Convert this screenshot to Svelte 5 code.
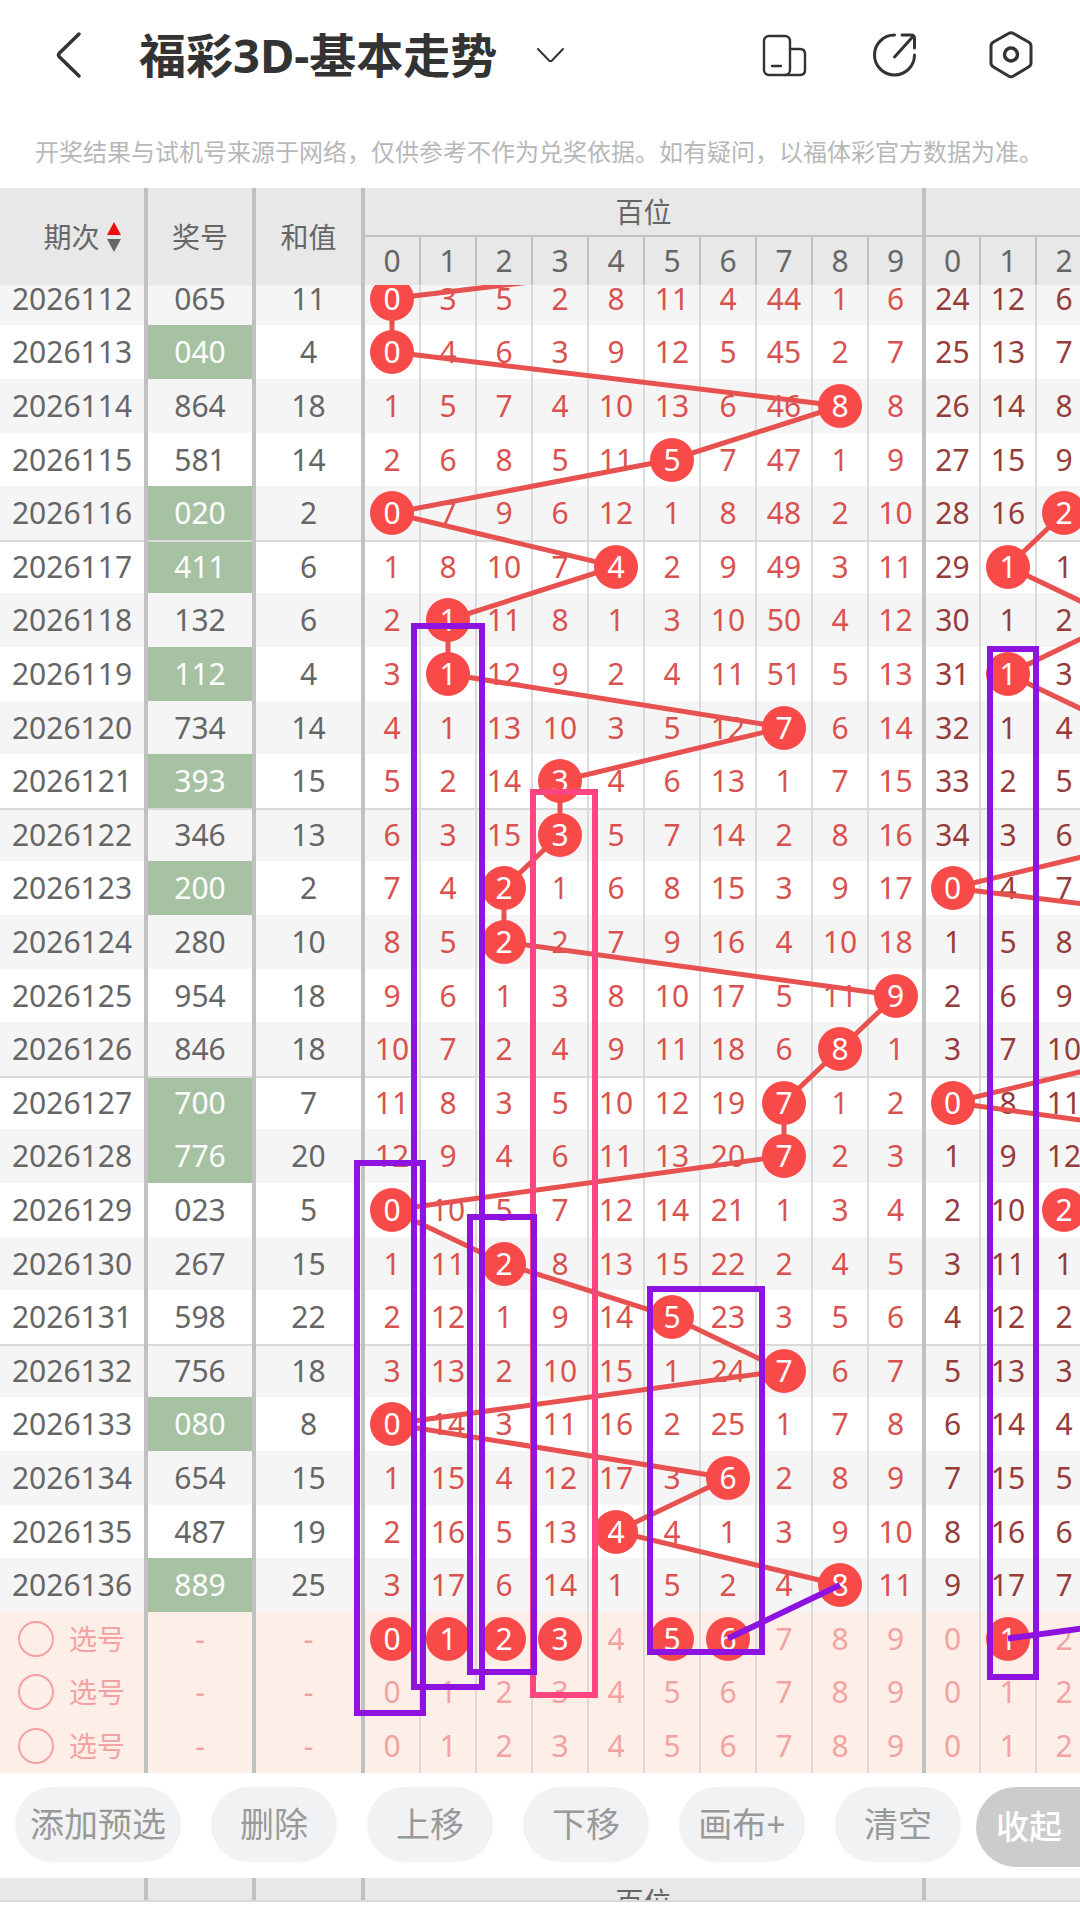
<script lang="ts">
    type Group = { name: string, digit: number, x: number, start: number[], columns: number[] };
    type Box = { x: number, y: number, w: number, h: number, color: string };

    const FIRST_ISSUE = 2026112;
    const CELL = 56;
    const PURPLE = '#8e13e0';
    const PINK = '#fd467f';

    const prizes = [
        '065', '040', '864', '581', '020', '411', '132', '112', '734', '393', '346', '200', '280',
        '954', '846', '700', '776', '023', '267', '598', '756', '080', '654', '487', '889'
    ];

    // x is the centre of the group's first column, start holds the counts of the first row
    const groups: Group[] = [
        { name: '百位', digit: 0, x: 392, start: [0, 3, 5, 2, 8, 11, 4, 44, 1, 6], columns: [0, 1, 2, 3, 4, 5, 6, 7, 8, 9] },
        { name: '', digit: 1, x: 952, start: [24, 12, 6], columns: [0, 1, 2] }
    ];

    // 53/54 row rhythm, 268px for every five rows
    const rhythm = [53, 54, 54, 53, 54];
    const rowTops = [0];
    for (let i = 0; i < prizes.length + 3; i++) rowTops.push(rowTops[i] + rhythm[i % 5]);
    const centerY = (row: number) => (rowTops[row] + rowTops[row + 1]) / 2;

    function missingCounts(group: Group) {
        const rows: number[][] = [];
        prizes.forEach((prize, i) => {
            const hit = Number(prize[group.digit]);
            rows.push(group.columns.map((c) => {
                if (c === hit) return 0;
                return i === 0 ? group.start[c] : rows[i - 1][c] + 1;
            }));
        });
        return rows;
    }

    const counts = groups.map(missingCounts);

    const rows = prizes.map((prize, i) => ({
        issue: FIRST_ISSUE + i,
        prize,
        sum: [...prize].reduce((total, d) => total + Number(d), 0),
        repeated: new Set(prize).size < 3
    }));

    function linePoints(group: Group, before: string) {
        const points = prizes.map((prize, i) => `${group.x + Number(prize[group.digit]) * CELL},${centerY(i)}`);
        return [before, ...points].filter(Boolean).join(' ');
    }

    const lines = [linePoints(groups[0], '840,-27'), linePoints(groups[1], '')];

    const boxes: Box[] = [
        { x: 533, y: 520, w: 62, h: 903, color: PINK },
        { x: 414, y: 354, w: 68, h: 1061, color: PURPLE },
        { x: 357, y: 891, w: 66, h: 550, color: PURPLE },
        { x: 470, y: 945, w: 64, h: 455, color: PURPLE },
        { x: 650, y: 1017, w: 112, h: 363, color: PURPLE },
        { x: 990, y: 377, w: 46, h: 1028, color: PURPLE }
    ];

    const lastRow = prizes.length - 1;
    const guides = [
        { x1: 840, x2: 728 },
        { x1: 1400, x2: 1008 }
    ];

    let picks: number[][][] = $state([
        [[0, 1, 2, 3, 5, 6], [1]],
        [[], []],
        [[], []]
    ]);
    let activePick = $state(-1);

    const tools = ['添加预选', '删除', '上移', '下移', '画布+', '清空'];

    function toggle(row: number, group: number, digit: number) {
        const list = picks[row][group];
        picks[row][group] = list.includes(digit) ? list.filter((d) => d !== digit) : [...list, digit];
    }
</script>

{#snippet columnWidths()}
    <colgroup>
        <col class="w-issue" />
        <col class="w-prize" />
        <col class="w-sum" />
        {#each { length: 9 } as _}<col class="w-digit" />{/each}
        <col class="w-last" />
        <col class="w-first" />
        <col class="w-digit" />
        <col class="w-digit" />
    </colgroup>
{/snippet}

<div class="page">
    <header class="top-bar">
        <button class="icon-btn" aria-label="返回">
            <svg width="48" height="48" viewBox="0 0 48 48">
                <path d="M34 3 L14.500 22 Q12.500 24 14.500 26 L34 45" stroke-width="3.500" />
            </svg>
        </button>
        <h1>福彩3D-基本走势</h1>
        <button class="icon-btn" aria-label="切换走势">
            <svg width="48" height="48" viewBox="0 0 48 48">
                <path d="M11 18 L22 29.500 Q23.500 31 25 29.500 L36 18" stroke-width="2" />
            </svg>
        </button>
        <div class="actions">
            <button class="icon-btn" aria-label="横竖屏">
                <svg width="48" height="48" viewBox="0 0 48 48">
                    <rect x="4" y="5" width="26" height="39" rx="5" stroke-width="2.400" />
                    <path d="M30 18 H40 Q45 18 45 23 V39 Q45 44 40 44 H25" stroke-width="2.400" />
                    <path d="M12 35 H21" stroke-width="2.400" />
                </svg>
            </button>
            <button class="icon-btn" aria-label="分享">
                <svg width="48" height="48" viewBox="0 0 48 48">
                    <path d="M24.500 4 A20 20 0 1 0 44.500 24" stroke-width="3" />
                    <path d="M32 4 H41 Q44.500 4 44.500 7.500 V17" stroke-width="3" />
                    <path d="M24.500 26 L43 5.500" stroke-width="3" />
                </svg>
            </button>
            <button class="icon-btn wide" aria-label="设置">
                <svg width="48" height="48" viewBox="0 0 48 48">
                    <path d="M21.500 2.500 Q24 1 26.500 2.500 L41.500 11 Q44 12.500 44 15 V32 Q44 34.500 41.500 36 L26.500 45 Q24 46.500 21.500 45 L6.500 36 Q4 34.500 4 32 V15 Q4 12.500 6.500 11 Z" stroke-width="3" />
                    <circle cx="24" cy="23.500" r="6.500" stroke-width="3.500" />
                </svg>
            </button>
        </div>
    </header>

    <p class="notice">开奖结果与试机号来源于网络，仅供参考不作为兑奖依据。如有疑问，以福体彩官方数据为准。</p>

    <div class="clip">
        <table class="head">
            {@render columnWidths()}
            <thead>
                <tr>
                    <th rowspan="2" class="thick">
                        <button class="sort">
                            期次
                            <svg width="14" height="30" viewBox="0 0 14 30" aria-hidden="true">
                                <path d="M7 0 L14 13 H0 Z" fill="#f20d0d" />
                                <path d="M7 30 L14 17 H0 Z" fill="#666" />
                            </svg>
                        </button>
                    </th>
                    <th rowspan="2" class="thick">奖号</th>
                    <th rowspan="2" class="thick">和值</th>
                    <th colspan="10" class="thick group">百位</th>
                    <th colspan="3" class="group"></th>
                </tr>
                <tr>
                    {#each groups as group}
                        {#each group.columns as c}
                            <th class="digit" class:thick={c === 9}>{c}</th>
                        {/each}
                    {/each}
                </tr>
            </thead>
        </table>
    </div>

    <div class="clip">
        <div class="chart">
            <table class="body">
                {@render columnWidths()}
                <tbody>
                    {#each rows as row, i}
                        <tr class:ruled={i > 0 && i % 5 === 0}>
                            <td class="thick">{row.issue}</td>
                            <td class="thick" class:repeated={row.repeated}>{row.prize}</td>
                            <td class="thick">{row.sum}</td>
                            {#each groups as group, g}
                                {#each group.columns as c}
                                    <td class={g === 0 ? 'hundreds' : 'tens'} class:thick={c === 9}>
                                        {#if Number(row.prize[group.digit]) === c}
                                            <span class="ball">{c}</span>
                                        {:else}
                                            {counts[g][i][c]}
                                        {/if}
                                    </td>
                                {/each}
                            {/each}
                        </tr>
                    {/each}
                    {#each picks as pick, p}
                        <tr class="pick-row">
                            <td class="thick">
                                <label>
                                    <input type="radio" name="pick" value={p} bind:group={activePick} />
                                    选号
                                </label>
                            </td>
                            <td class="thick">-</td>
                            <td class="thick">-</td>
                            {#each groups as group, g}
                                {#each group.columns as c}
                                    <td class:thick={c === 9}>
                                        <button class="pick" class:ball={pick[g].includes(c)} onclick={() => toggle(p, g, c)}>{c}</button>
                                    </td>
                                {/each}
                            {/each}
                        </tr>
                    {/each}
                </tbody>
            </table>

            <svg class="lines" aria-hidden="true">
                {#each lines as points}
                    <polyline {points} />
                {/each}
            </svg>

            <svg class="marks" aria-hidden="true">
                {#each boxes as box}
                    <rect x={box.x} y={box.y} width={box.w} height={box.h} stroke={box.color} />
                {/each}
                {#each guides as guide}
                    <line x1={guide.x1} y1={centerY(lastRow)} x2={guide.x2} y2={centerY(lastRow + 1)} stroke={PURPLE} />
                {/each}
            </svg>
        </div>
    </div>

    <div class="tool-bar">
        <div class="tools">
            {#each tools as tool}
                <button class="tool">{tool}</button>
            {/each}
        </div>
        <button class="collapse">收起</button>
    </div>

    <div class="clip next">
        <table class="head">
            {@render columnWidths()}
            <tbody>
                <tr>
                    <td class="thick"></td>
                    <td class="thick"></td>
                    <td class="thick"></td>
                    <td colspan="10" class="thick group">百位</td>
                    <td colspan="3" class="group"></td>
                </tr>
            </tbody>
        </table>
    </div>
</div>

<style>
    :global(body) { margin: 0; background: #fff; }

    .page {
        min-height: 100vh;
        overflow: hidden;
        background: #fff;
        color: #666;
        font-family: "Noto Sans", "Noto Sans CJK SC", sans-serif;
    }

    button {
        margin: 0;
        padding: 0;
        border: 0;
        background: none;
        color: inherit;
        font: inherit;
        cursor: pointer;
    }

    .top-bar {
        display: flex;
        align-items: center;
        height: 110px;
        padding: 0 38px 0 45px;
    }

    h1 {
        margin: 0 30px 0 46px;
        color: #333;
        font-size: 47px;
        font-weight: 700;
        line-height: 60px;
        white-space: nowrap;
    }

    .icon-btn { display: flex; justify-content: center; width: 48px; }
    .icon-btn.wide { width: 62px; }
    .icon-btn svg { fill: none; stroke: #333; stroke-linecap: round; stroke-linejoin: round; }

    .actions { display: flex; gap: 62px; margin-left: auto; }

    .notice {
        margin: 0;
        padding: 24px 0 18px 35px;
        color: #b8b8b8;
        font-size: 24px;
        line-height: 36px;
        white-space: nowrap;
    }

    .clip { overflow: hidden; }

    /* the columns alone decide how wide the tables are */
    table { width: 0; table-layout: fixed; border-collapse: separate; border-spacing: 0; }
    .w-issue { width: 148px; }
    .w-prize { width: 108px; }
    .w-sum { width: 109px; }
    .w-first { width: 55px; }
    .w-digit { width: 56px; }
    .w-last { width: 57px; }

    th, td {
        box-sizing: border-box;
        padding: 0;
        border-right: 2px solid #dadada;
        font-weight: 400;
        text-align: center;
        white-space: nowrap;
    }
    .thick { border-right: 4px solid #c1c1c1; }

    .head { background: #e8e8e8; font-size: 28px; line-height: 40px; }
    .head .group { height: 49px; border-bottom: 2px solid #c1c1c1; }
    .head .digit { height: 48px; font-size: 30px; border-right-color: #c1c1c1; }
    .head .digit.thick { border-right-color: #c1c1c1; }

    .sort { display: inline-flex; align-items: center; gap: 7px; padding-left: 20px; }

    .chart { position: relative; margin-top: -13px; }
    .body { font-size: 30px; line-height: 40px; }
    .body tr { height: 54px; background: #fff; }
    .body tr:nth-child(5n + 1), .body tr:nth-child(5n + 4) { height: 53px; }
    .body tr:nth-child(odd) { background: #f5f5f5; }
    .body tr.ruled td { box-shadow: inset 0 2px #dadada; }
    .body tr.pick-row { background: #feeee8; color: #f2a3a1; }

    .repeated { background: #a7c1a3; color: #fff; }
    .hundreds { color: #d9524f; }
    .tens { color: #963c3a; }

    .ball, .pick { display: block; width: 44px; height: 44px; margin: 0 auto; line-height: 44px; }
    .ball {
        position: relative;
        z-index: 2;
        border-radius: 50%;
        background: #f94a4a;
        color: #fff;
    }

    label { display: flex; align-items: center; gap: 15px; padding-left: 18px; font-size: 28px; }
    input {
        appearance: none;
        box-sizing: border-box;
        width: 36px;
        height: 36px;
        margin: 0;
        border: 2px solid #f2a3a1;
        border-radius: 50%;
    }
    input:checked { background: #f94a4a; }

    .lines, .marks {
        position: absolute;
        top: 0;
        left: 0;
        width: 100%;
        height: 100%;
        fill: none;
        pointer-events: none;
    }
    .lines { z-index: 1; stroke: #e7514f; stroke-width: 5px; }
    .marks { z-index: 3; stroke-width: 6px; }

    .tool-bar { display: flex; padding: 14px 0 11px; }
    .tools { display: flex; align-items: flex-start; gap: 30px; padding: 0 15px; }
    .tool {
        min-width: 126px;
        height: 75px;
        padding: 0 15px 5px;
        border-radius: 38px;
        background: #f1f2f4;
        color: #999;
        font-size: 34px;
        white-space: nowrap;
    }
    .collapse {
        flex: 1;
        height: 80px;
        padding: 0 0 5px 20px;
        border-radius: 40px 0 0 40px;
        background: #ccc;
        color: #fff;
        font-size: 33px;
        font-weight: 500;
        text-align: left;
        white-space: nowrap;
    }

    .next { height: 22px; border-bottom: 2px solid #dadada; }
</style>
